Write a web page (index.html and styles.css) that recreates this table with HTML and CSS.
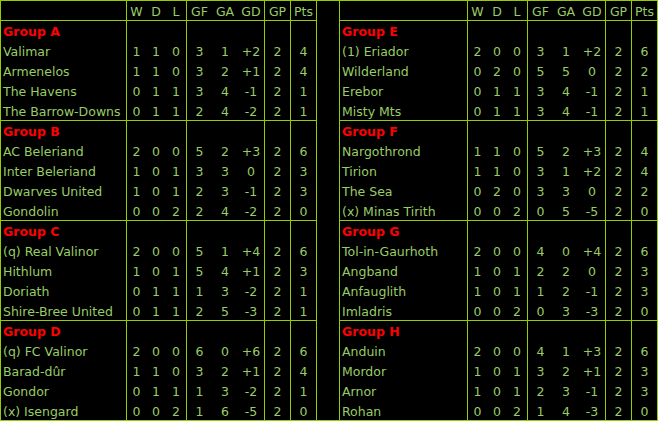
FILE: index.html
```html
<!DOCTYPE html>
<html>
<head>
<meta charset="utf-8">
<title>Standings</title>
<link rel="stylesheet" href="styles.css">
</head>
<body>
<div class="board">
  <div class="half">
    <div class="row head"><span class="cell name"></span><span class="cell">W</span><span class="cell">D</span><span class="cell">L</span><span class="cell">GF</span><span class="cell">GA</span><span class="cell">GD</span><span class="cell">GP</span><span class="cell">Pts</span></div>
    <div class="row group"><span class="cell name">Group A</span><span class="cell"></span><span class="cell"></span><span class="cell"></span><span class="cell"></span><span class="cell"></span><span class="cell"></span><span class="cell"></span><span class="cell"></span></div>
    <div class="row"><span class="cell name">Valimar</span><span class="cell">1</span><span class="cell">1</span><span class="cell">0</span><span class="cell">3</span><span class="cell">1</span><span class="cell">+2</span><span class="cell">2</span><span class="cell">4</span></div>
    <div class="row"><span class="cell name">Armenelos</span><span class="cell">1</span><span class="cell">1</span><span class="cell">0</span><span class="cell">3</span><span class="cell">2</span><span class="cell">+1</span><span class="cell">2</span><span class="cell">4</span></div>
    <div class="row"><span class="cell name">The Havens</span><span class="cell">0</span><span class="cell">1</span><span class="cell">1</span><span class="cell">3</span><span class="cell">4</span><span class="cell">-1</span><span class="cell">2</span><span class="cell">1</span></div>
    <div class="row"><span class="cell name">The Barrow-Downs</span><span class="cell">0</span><span class="cell">1</span><span class="cell">1</span><span class="cell">2</span><span class="cell">4</span><span class="cell">-2</span><span class="cell">2</span><span class="cell">1</span></div>
    <div class="row group"><span class="cell name">Group B</span><span class="cell"></span><span class="cell"></span><span class="cell"></span><span class="cell"></span><span class="cell"></span><span class="cell"></span><span class="cell"></span><span class="cell"></span></div>
    <div class="row"><span class="cell name">AC Beleriand</span><span class="cell">2</span><span class="cell">0</span><span class="cell">0</span><span class="cell">5</span><span class="cell">2</span><span class="cell">+3</span><span class="cell">2</span><span class="cell">6</span></div>
    <div class="row"><span class="cell name">Inter Beleriand</span><span class="cell">1</span><span class="cell">0</span><span class="cell">1</span><span class="cell">3</span><span class="cell">3</span><span class="cell">0</span><span class="cell">2</span><span class="cell">3</span></div>
    <div class="row"><span class="cell name">Dwarves United</span><span class="cell">1</span><span class="cell">0</span><span class="cell">1</span><span class="cell">2</span><span class="cell">3</span><span class="cell">-1</span><span class="cell">2</span><span class="cell">3</span></div>
    <div class="row"><span class="cell name">Gondolin</span><span class="cell">0</span><span class="cell">0</span><span class="cell">2</span><span class="cell">2</span><span class="cell">4</span><span class="cell">-2</span><span class="cell">2</span><span class="cell">0</span></div>
    <div class="row group"><span class="cell name">Group C</span><span class="cell"></span><span class="cell"></span><span class="cell"></span><span class="cell"></span><span class="cell"></span><span class="cell"></span><span class="cell"></span><span class="cell"></span></div>
    <div class="row"><span class="cell name">(q) Real Valinor</span><span class="cell">2</span><span class="cell">0</span><span class="cell">0</span><span class="cell">5</span><span class="cell">1</span><span class="cell">+4</span><span class="cell">2</span><span class="cell">6</span></div>
    <div class="row"><span class="cell name">Hithlum</span><span class="cell">1</span><span class="cell">0</span><span class="cell">1</span><span class="cell">5</span><span class="cell">4</span><span class="cell">+1</span><span class="cell">2</span><span class="cell">3</span></div>
    <div class="row"><span class="cell name">Doriath</span><span class="cell">0</span><span class="cell">1</span><span class="cell">1</span><span class="cell">1</span><span class="cell">3</span><span class="cell">-2</span><span class="cell">2</span><span class="cell">1</span></div>
    <div class="row"><span class="cell name">Shire-Bree United</span><span class="cell">0</span><span class="cell">1</span><span class="cell">1</span><span class="cell">2</span><span class="cell">5</span><span class="cell">-3</span><span class="cell">2</span><span class="cell">1</span></div>
    <div class="row group"><span class="cell name">Group D</span><span class="cell"></span><span class="cell"></span><span class="cell"></span><span class="cell"></span><span class="cell"></span><span class="cell"></span><span class="cell"></span><span class="cell"></span></div>
    <div class="row"><span class="cell name">(q) FC Valinor</span><span class="cell">2</span><span class="cell">0</span><span class="cell">0</span><span class="cell">6</span><span class="cell">0</span><span class="cell">+6</span><span class="cell">2</span><span class="cell">6</span></div>
    <div class="row"><span class="cell name">Barad-dûr</span><span class="cell">1</span><span class="cell">1</span><span class="cell">0</span><span class="cell">3</span><span class="cell">2</span><span class="cell">+1</span><span class="cell">2</span><span class="cell">4</span></div>
    <div class="row"><span class="cell name">Gondor</span><span class="cell">0</span><span class="cell">1</span><span class="cell">1</span><span class="cell">1</span><span class="cell">3</span><span class="cell">-2</span><span class="cell">2</span><span class="cell">1</span></div>
    <div class="row"><span class="cell name">(x) Isengard</span><span class="cell">0</span><span class="cell">0</span><span class="cell">2</span><span class="cell">1</span><span class="cell">6</span><span class="cell">-5</span><span class="cell">2</span><span class="cell">0</span></div>
  </div>
  <div class="gap"></div>
  <div class="half right">
    <div class="row head"><span class="cell name"></span><span class="cell">W</span><span class="cell">D</span><span class="cell">L</span><span class="cell">GF</span><span class="cell">GA</span><span class="cell">GD</span><span class="cell">GP</span><span class="cell">Pts</span></div>
    <div class="row group"><span class="cell name">Group E</span><span class="cell"></span><span class="cell"></span><span class="cell"></span><span class="cell"></span><span class="cell"></span><span class="cell"></span><span class="cell"></span><span class="cell"></span></div>
    <div class="row"><span class="cell name">(1) Eriador</span><span class="cell">2</span><span class="cell">0</span><span class="cell">0</span><span class="cell">3</span><span class="cell">1</span><span class="cell">+2</span><span class="cell">2</span><span class="cell">6</span></div>
    <div class="row"><span class="cell name">Wilderland</span><span class="cell">0</span><span class="cell">2</span><span class="cell">0</span><span class="cell">5</span><span class="cell">5</span><span class="cell">0</span><span class="cell">2</span><span class="cell">2</span></div>
    <div class="row"><span class="cell name">Erebor</span><span class="cell">0</span><span class="cell">1</span><span class="cell">1</span><span class="cell">3</span><span class="cell">4</span><span class="cell">-1</span><span class="cell">2</span><span class="cell">1</span></div>
    <div class="row"><span class="cell name">Misty Mts</span><span class="cell">0</span><span class="cell">1</span><span class="cell">1</span><span class="cell">3</span><span class="cell">4</span><span class="cell">-1</span><span class="cell">2</span><span class="cell">1</span></div>
    <div class="row group"><span class="cell name">Group F</span><span class="cell"></span><span class="cell"></span><span class="cell"></span><span class="cell"></span><span class="cell"></span><span class="cell"></span><span class="cell"></span><span class="cell"></span></div>
    <div class="row"><span class="cell name">Nargothrond</span><span class="cell">1</span><span class="cell">1</span><span class="cell">0</span><span class="cell">5</span><span class="cell">2</span><span class="cell">+3</span><span class="cell">2</span><span class="cell">4</span></div>
    <div class="row"><span class="cell name">Tirion</span><span class="cell">1</span><span class="cell">1</span><span class="cell">0</span><span class="cell">3</span><span class="cell">1</span><span class="cell">+2</span><span class="cell">2</span><span class="cell">4</span></div>
    <div class="row"><span class="cell name">The Sea</span><span class="cell">0</span><span class="cell">2</span><span class="cell">0</span><span class="cell">3</span><span class="cell">3</span><span class="cell">0</span><span class="cell">2</span><span class="cell">2</span></div>
    <div class="row"><span class="cell name">(x) Minas Tirith</span><span class="cell">0</span><span class="cell">0</span><span class="cell">2</span><span class="cell">0</span><span class="cell">5</span><span class="cell">-5</span><span class="cell">2</span><span class="cell">0</span></div>
    <div class="row group"><span class="cell name">Group G</span><span class="cell"></span><span class="cell"></span><span class="cell"></span><span class="cell"></span><span class="cell"></span><span class="cell"></span><span class="cell"></span><span class="cell"></span></div>
    <div class="row"><span class="cell name">Tol-in-Gaurhoth</span><span class="cell">2</span><span class="cell">0</span><span class="cell">0</span><span class="cell">4</span><span class="cell">0</span><span class="cell">+4</span><span class="cell">2</span><span class="cell">6</span></div>
    <div class="row"><span class="cell name">Angband</span><span class="cell">1</span><span class="cell">0</span><span class="cell">1</span><span class="cell">2</span><span class="cell">2</span><span class="cell">0</span><span class="cell">2</span><span class="cell">3</span></div>
    <div class="row"><span class="cell name">Anfauglith</span><span class="cell">1</span><span class="cell">0</span><span class="cell">1</span><span class="cell">1</span><span class="cell">2</span><span class="cell">-1</span><span class="cell">2</span><span class="cell">3</span></div>
    <div class="row"><span class="cell name">Imladris</span><span class="cell">0</span><span class="cell">0</span><span class="cell">2</span><span class="cell">0</span><span class="cell">3</span><span class="cell">-3</span><span class="cell">2</span><span class="cell">0</span></div>
    <div class="row group"><span class="cell name">Group H</span><span class="cell"></span><span class="cell"></span><span class="cell"></span><span class="cell"></span><span class="cell"></span><span class="cell"></span><span class="cell"></span><span class="cell"></span></div>
    <div class="row"><span class="cell name">Anduin</span><span class="cell">2</span><span class="cell">0</span><span class="cell">0</span><span class="cell">4</span><span class="cell">1</span><span class="cell">+3</span><span class="cell">2</span><span class="cell">6</span></div>
    <div class="row"><span class="cell name">Mordor</span><span class="cell">1</span><span class="cell">0</span><span class="cell">1</span><span class="cell">3</span><span class="cell">2</span><span class="cell">+1</span><span class="cell">2</span><span class="cell">3</span></div>
    <div class="row"><span class="cell name">Arnor</span><span class="cell">1</span><span class="cell">0</span><span class="cell">1</span><span class="cell">2</span><span class="cell">3</span><span class="cell">-1</span><span class="cell">2</span><span class="cell">3</span></div>
    <div class="row"><span class="cell name">Rohan</span><span class="cell">0</span><span class="cell">0</span><span class="cell">2</span><span class="cell">1</span><span class="cell">4</span><span class="cell">-3</span><span class="cell">2</span><span class="cell">0</span></div>
  </div>
</div>
</body>
</html>
```

FILE: styles.css
```css
html, body {
  margin: 0;
  padding: 0;
  background: #000;
}

.board {
  display: flex;
  width: 658px;
  border-bottom: 1px solid #99cc00;
  font-family: "DejaVu Sans", sans-serif;
  font-size: 12.5px;
  line-height: 17px;
  color: #99cc66;
}

.half {
  display: grid;
  grid-template-columns: 126px repeat(3, 20px) repeat(5, 26px);
  grid-auto-rows: 20px;
}

.half.right {
  grid-template-columns: 128px repeat(3, 20px) repeat(5, 26px);
  border-right: 1px solid #99cc00;
}

.row {
  display: contents;
}

.cell {
  box-sizing: border-box;
  padding-top: 3px;
  text-align: center;
  white-space: nowrap;
  overflow: hidden;
}

.cell:nth-child(1),
.cell:nth-child(2),
.cell:nth-child(5),
.cell:nth-child(8),
.cell:nth-child(9) {
  border-left: 1px solid #99cc00;
}

.cell.name {
  text-align: left;
  padding-left: 2px;
}

.head .cell,
.group .cell {
  border-top: 1px solid #99cc00;
  padding-top: 2px;
}

.group .name {
  color: #ff0000;
  font-weight: bold;
}

.gap {
  box-sizing: border-box;
  width: 23px;
  border-left: 1px solid #99cc00;
  border-top: 1px solid #99cc00;
}
```
